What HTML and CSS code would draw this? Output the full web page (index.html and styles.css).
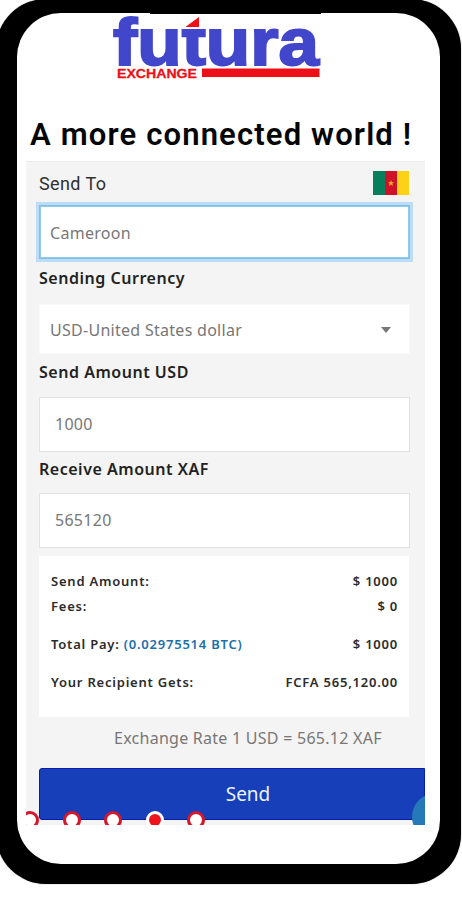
FILE: index.html
```html
<!DOCTYPE html>
<html lang="en">
<head>
<meta charset="utf-8">
<title>Futura Exchange</title>
<link rel="stylesheet" href="styles.css">
</head>
<body>
<div class="phone">
  <main class="screen">
    <svg class="logo" width="216" height="68" viewBox="0 0 216 68">
      <text class="logo-name" x="2" y="51.500" textLength="206" lengthAdjust="spacingAndGlyphs">futura</text>
      <path fill="#fff" d="M70 0h27v16H70z"/>
      <path fill="#ee1017" d="M75 13.500 88 4v10H75z"/>
      <text class="logo-sub" x="6" y="64.500" textLength="80" lengthAdjust="spacingAndGlyphs">EXCHANGE</text>
      <path fill="#ee1017" d="M91 55.500h117.500v8.500H91z"/>
    </svg>
    <h1 class="title"><span>A more connected world !</span></h1>
    <section class="panel">
      <div class="top-row">
        <span class="send-to">Send To</span>
        <svg class="flag" width="36" height="24" viewBox="0 0 36 24">
          <path fill="#087f5c" d="M0 0h12v24H0z"/>
          <path fill="#cf1228" d="M12 0h12v24H12z"/>
          <path fill="#fcd116" d="M24 0h12v24H24z"/>
          <path fill="#f5b229" d="m18 9 .8 2.200h2.400l-1.900 1.400.7 2.400-2-1.400-2 1.400.7-2.400-1.900-1.400h2.400z"/>
        </svg>
      </div>
      <div class="field focused"><span class="t-country">Cameroon</span></div>
      <div class="label l1"><span>Sending Currency</span></div>
      <div class="field select"><span class="t-currency">USD-United States dollar</span><i class="caret"></i></div>
      <div class="label l2"><span>Send Amount USD</span></div>
      <div class="field amount"><span>1000</span></div>
      <div class="label l3"><span>Receive Amount XAF</span></div>
      <div class="field amount"><span>565120</span></div>
      <div class="summary">
        <div class="row"><span>Send Amount:</span><span>$ 1000</span></div>
        <div class="row"><span>Fees:</span><span>$ 0</span></div>
        <div class="row total"><span>Total Pay: <b>(0.02975514 BTC)</b></span><span>$ 1000</span></div>
        <div class="row gets"><span>Your Recipient Gets:</span><span>FCFA 565,120.00</span></div>
      </div>
      <div class="rate"><span>Exchange Rate 1 USD = 565.12 XAF</span></div>
      <div class="button"><span>Send</span></div>
      <div class="dots"><i></i><i></i><i></i><i class="active"></i><i></i></div>
      <div class="chat"></div>
    </section>
  </main>
  <div class="notch"></div>
</div>
</body>
</html>
```
FILE: styles.css
```css
* { box-sizing: border-box; }
body {
  margin: 0;
  height: 900px;
  overflow: hidden;
  background: #fff;
  font-family: "Noto Sans", sans-serif;
}
.phone {
  position: relative;
  width: 465px;
  height: 885px;
  margin-left: -4px;
  margin-top: -1px;
  padding: 14px 21px 20px;
  background: #000;
  border-radius: 50px;
  box-shadow: 0 0 1px #555;
}
.screen {
  height: 851px;
  width: 423px;
  background: #fff;
  border-radius: 44px;
}
.notch {
  position: absolute;
  left: 154px;
  top: 13px;
  width: 171px;
  height: 2px;
  background: #000;
}
.logo { display: block; margin-left: 94px; overflow: visible; }
.logo-name {
  font: bold 66px "Liberation Sans", sans-serif;
  fill: #4146ca;
  stroke: #4146ca;
  stroke-width: 2px;
}
.logo-sub {
  font: bold 13px "Liberation Sans", sans-serif;
  fill: #ee1017;
  stroke: #ee1017;
  stroke-width: .3px;
}
.title {
  margin: 34px 0 0 13px;
  height: 46px;
  font: 600 31px/40px Roboto, sans-serif;
  letter-spacing: 1.150px;
  color: #050505;
  white-space: nowrap;
}
.panel {
  position: relative;
  width: 399px;
  height: 664px;
  margin-left: 9px;
  padding: 9px 16px 0 13px;
  background: #f4f4f4;
  border-top: 1px solid #ebebeb;
  overflow: hidden;
}
.top-row {
  display: flex;
  justify-content: space-between;
  align-items: center;
  height: 24px;
  font: 18px/24px Roboto, sans-serif;
  letter-spacing: .4px;
  color: #303030;
}
.send-to { padding-top: 1px; }
.flag { display: block; }
.field {
  display: flex;
  align-items: center;
  height: 55px;
  width: 371px;
  padding: 0 15px 2px;
  background: #fff;
  border: 1px solid #e2e2e2;
  font-size: 16px;
  line-height: 24px;
  letter-spacing: .28px;
  color: #777;
}
.focused {
  height: 54px;
  margin-top: 10px;
  padding: 2px 10px 0;
  border-color: #7fc1e8;
  box-shadow: 0 0 0 3px #bcdcf8, inset 0 0 0 1px #8fcbea;
}
.label {
  height: 24px;
  font-size: 16px;
  line-height: 24px;
  font-weight: 600;
  letter-spacing: .52px;
  color: #222;
  white-space: nowrap;
}
.l1 { margin: 7px 0 14px; }
.l2 { margin: 6px 0 13px; }
.l3 { margin: 5px 0 12px; }
.select {
  justify-content: space-between;
  height: 50px;
  padding: 2px 18px 0 10px;
  border-color: #f9f9f9;
}
.caret {
  border: 5px solid transparent;
  border-top: 6px solid #777;
  border-bottom: 0;
}
.summary {
  height: 161px;
  width: 370px;
  margin-top: 8px;
  padding: 13px 11px 0 12px;
  background: #fff;
  font-size: 13px;
  line-height: 24px;
  font-weight: 600;
  letter-spacing: .78px;
  color: #2b2b2b;
}
.row { display: flex; justify-content: space-between; height: 25px; white-space: nowrap; }
.row b { color: #1b70ac; font-weight: 600; }
.total, .gets { margin-top: 13px; }
.rate {
  height: 28px;
  margin: 7px 0 16px 75px;
  font-size: 16px;
  line-height: 28px;
  letter-spacing: .26px;
  color: #777;
  white-space: nowrap;
}
.button {
  height: 52px;
  width: 386px;
  background: #163fb9;
  border: 1px solid #0a1cab;
  border-radius: 3px 0 0 3px;
  color: #edf2ff;
  font-size: 19px;
  line-height: 51px;
  text-align: center;
}
.button span { margin-left: 32px; }
.dots {
  position: absolute;
  left: -5px;
  top: 649px;
  display: flex;
  gap: 23.600px;
}
.dots i {
  width: 18px;
  height: 18px;
  border: 3.500px solid #d3182b;
  border-radius: 50%;
  background: #fff;
}
.dots .active { border-color: #fff; background: #ed121b; }
.chat {
  position: absolute;
  right: -35px;
  top: 631px;
  width: 48px;
  height: 48px;
  border-radius: 50%;
  background: #2579b9;
}
```
